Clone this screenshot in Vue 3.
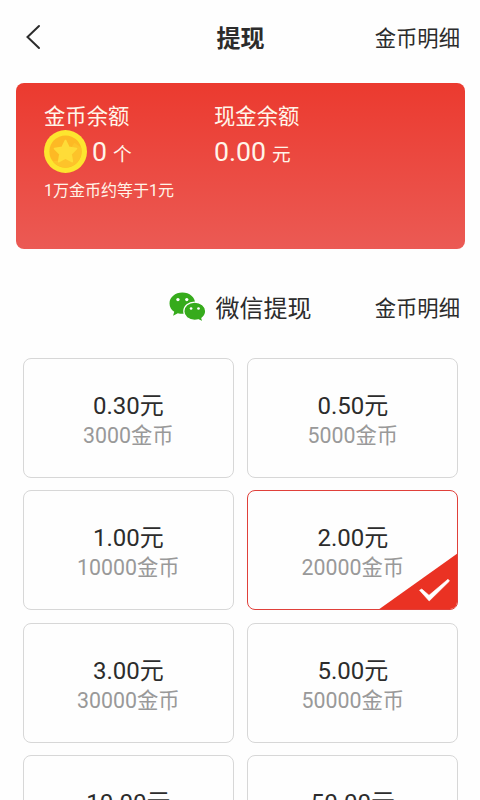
<script setup>
import { ref } from 'vue'

const options = [
  { cash: '0.30', coins: 3000 },
  { cash: '0.50', coins: 5000 },
  { cash: '1.00', coins: 10000 },
  { cash: '2.00', coins: 20000 },
  { cash: '3.00', coins: 30000 },
  { cash: '5.00', coins: 50000 },
  { cash: '10.00', coins: 100000 },
  { cash: '50.00', coins: 500000 },
]
const selected = ref(3)
</script>

<template>
  <div class="page">
    <header class="bar">
      <svg class="back" viewBox="0 0 16 26" aria-hidden="true">
        <path d="M14 2 2.500 13 14 24" />
      </svg>
      <h1 class="title">提现</h1>
      <span class="link">金币明细</span>
    </header>

    <section class="balance">
      <div class="col coins">
        <div class="label">金币余额</div>
        <div class="amount">
          <svg class="coin" viewBox="0 0 44 44" aria-hidden="true">
            <circle cx="22" cy="22" r="22" fill="#fde52f" />
            <circle cx="22" cy="22" r="16.500" fill="#fdb924" />
            <path d="M9 32A16.500 16.500 0 0 0 38 18L31 13 20 31Z" fill="#fdc32a" />
            <path
              d="m22 11 3.400 7 7.700 1.100-5.600 5.400 1.300 7.700-6.800-3.700-6.800 3.700 1.300-7.700-5.600-5.400 7.700-1.100Z"
              fill="#fedc38" stroke="#fedc38" stroke-width="2" stroke-linejoin="round"
            />
          </svg>
          <span class="number">0</span><span class="unit">个</span>
        </div>
        <div class="rate">1万金币约等于1元</div>
      </div>
      <div class="col">
        <div class="label">现金余额</div>
        <div class="amount"><span class="number">0.00</span><span class="unit">元</span></div>
      </div>
    </section>

    <section class="method">
      <svg class="wechat" viewBox="0 0 36 30" aria-hidden="true">
        <path
          d="M13 .5C6 .5.5 5.200.5 11c0 3.300 1.700 6.100 4.600 8.100L4 23l4.600-2.400c1.400.4 2.900.6 4.400.6 7 0 12.500-4.500 12.500-10.200S20 .5 13 .5Z"
          fill="#36ab1c"
        />
        <path
          d="M25 9.800c6 0 10.700 3.900 10.700 8.900 0 2.700-1.400 5.100-3.700 6.700l1 3.800-4.200-2.200c-1.200.3-2.500.5-3.800.5-6 0-10.600-3.900-10.600-8.800S19 9.800 25 9.800Z"
          fill="#36ab1c" stroke="#fff" stroke-width="1.200"
        />
        <g fill="#fff">
          <circle cx="8.700" cy="7.300" r="1.600" />
          <circle cx="17.300" cy="7.300" r="1.600" />
          <circle cx="21.500" cy="16" r="1.300" />
          <circle cx="28.700" cy="16" r="1.300" />
        </g>
      </svg>
      <h2 class="method-name">微信提现</h2>
      <span class="link">金币明细</span>
    </section>

    <main class="grid">
      <div
        v-for="(item, i) in options"
        :key="item.cash"
        class="tile"
        :class="{ active: i === selected }"
        @click="selected = i"
      >
        <div class="cash">{{ item.cash }}元</div>
        <div class="cost">{{ item.coins }}金币</div>
        <svg v-if="i === selected" class="corner" viewBox="0 0 80 57" aria-hidden="true">
          <path d="M80 0V57H0Z" fill="#ea3223" />
          <path d="M41.500 37.200 43.800 36 51 42.300 70 26.200 71.500 28 51.200 48Z" fill="#fff" stroke="#fff" stroke-width=".6" stroke-linejoin="round" />
        </svg>
      </div>
    </main>
  </div>
</template>

<style>
body {
  background: #fefefe;
  overflow: hidden;
}
</style>

<style scoped>
.page {
  width: 480px;
  height: 800px;
  overflow: hidden;
  background: #fefefe;
  color: #2c2c2c;
  font-family: Roboto, "Noto Sans CJK SC", sans-serif;
}
.bar {
  display: grid;
  grid-template-columns: 1fr auto 1fr;
  align-items: center;
  box-sizing: border-box;
  height: 75px;
  padding: 2px 20px 0 25px;
}
.back {
  width: 16px;
  height: 26px;
  margin-bottom: 4px;
  fill: none;
  stroke: #2c2c2c;
  stroke-width: 2;
  stroke-linecap: round;
}
.title {
  margin: 0 4px 0 0;
  font-size: 24px;
  line-height: 32px;
  font-weight: 700;
}
.link {
  justify-self: end;
  font-size: 21.33px;
  line-height: 28px;
}
.balance {
  display: flex;
  box-sizing: border-box;
  width: 449px;
  height: 166px;
  margin: 8px 0 0 16px;
  padding: 20px 28px 0;
  border-radius: 8px;
  color: #fff5e9;
  background: linear-gradient(#eb3a2f, #eb5a54);
}
.coins {
  width: 170px;
}
.label {
  font-size: 21.33px;
  line-height: 28px;
}
.amount {
  display: flex;
  align-items: baseline;
  height: 43px;
  line-height: 43px;
}
.coin {
  width: 43px;
  height: 43px;
  margin: -2px 5px 0 0;
  align-self: center;
}
.number {
  font-size: 26.67px;
}
.unit {
  margin-left: 6px;
  font-size: 18.67px;
}
.rate {
  margin-top: 6px;
  font-size: 16px;
  line-height: 22px;
}
.method {
  display: grid;
  grid-template-columns: 37px auto 1fr;
  align-items: center;
  height: 109px;
  padding: 10px 20px 0 168.5px;
  box-sizing: border-box;
  column-gap: 10px;
}
.wechat {
  width: 37px;
  height: 31px;
  margin-bottom: 2px;
}
.method-name {
  margin: 0;
  font-size: 24px;
  line-height: 32px;
  font-weight: 400;
}
.grid {
  display: grid;
  grid-template-columns: 211px 211px;
  grid-auto-rows: 120px;
  gap: 12.4px 13.5px;
  padding-left: 22.8px;
}
.tile {
  position: relative;
  display: flex;
  flex-direction: column;
  align-items: center;
  box-sizing: border-box;
  padding-top: 31px;
  border: 1.33px solid #d7d7d7;
  border-radius: 8px;
  overflow: hidden;
}
.active {
  border-color: #e0403a;
}
.cash {
  font-size: 24px;
  line-height: 32px;
}
.cost {
  font-size: 21.33px;
  line-height: 28px;
  color: #999;
}
.corner {
  position: absolute;
  right: -1px;
  bottom: -1px;
  width: 80px;
  height: 57px;
}
</style>
